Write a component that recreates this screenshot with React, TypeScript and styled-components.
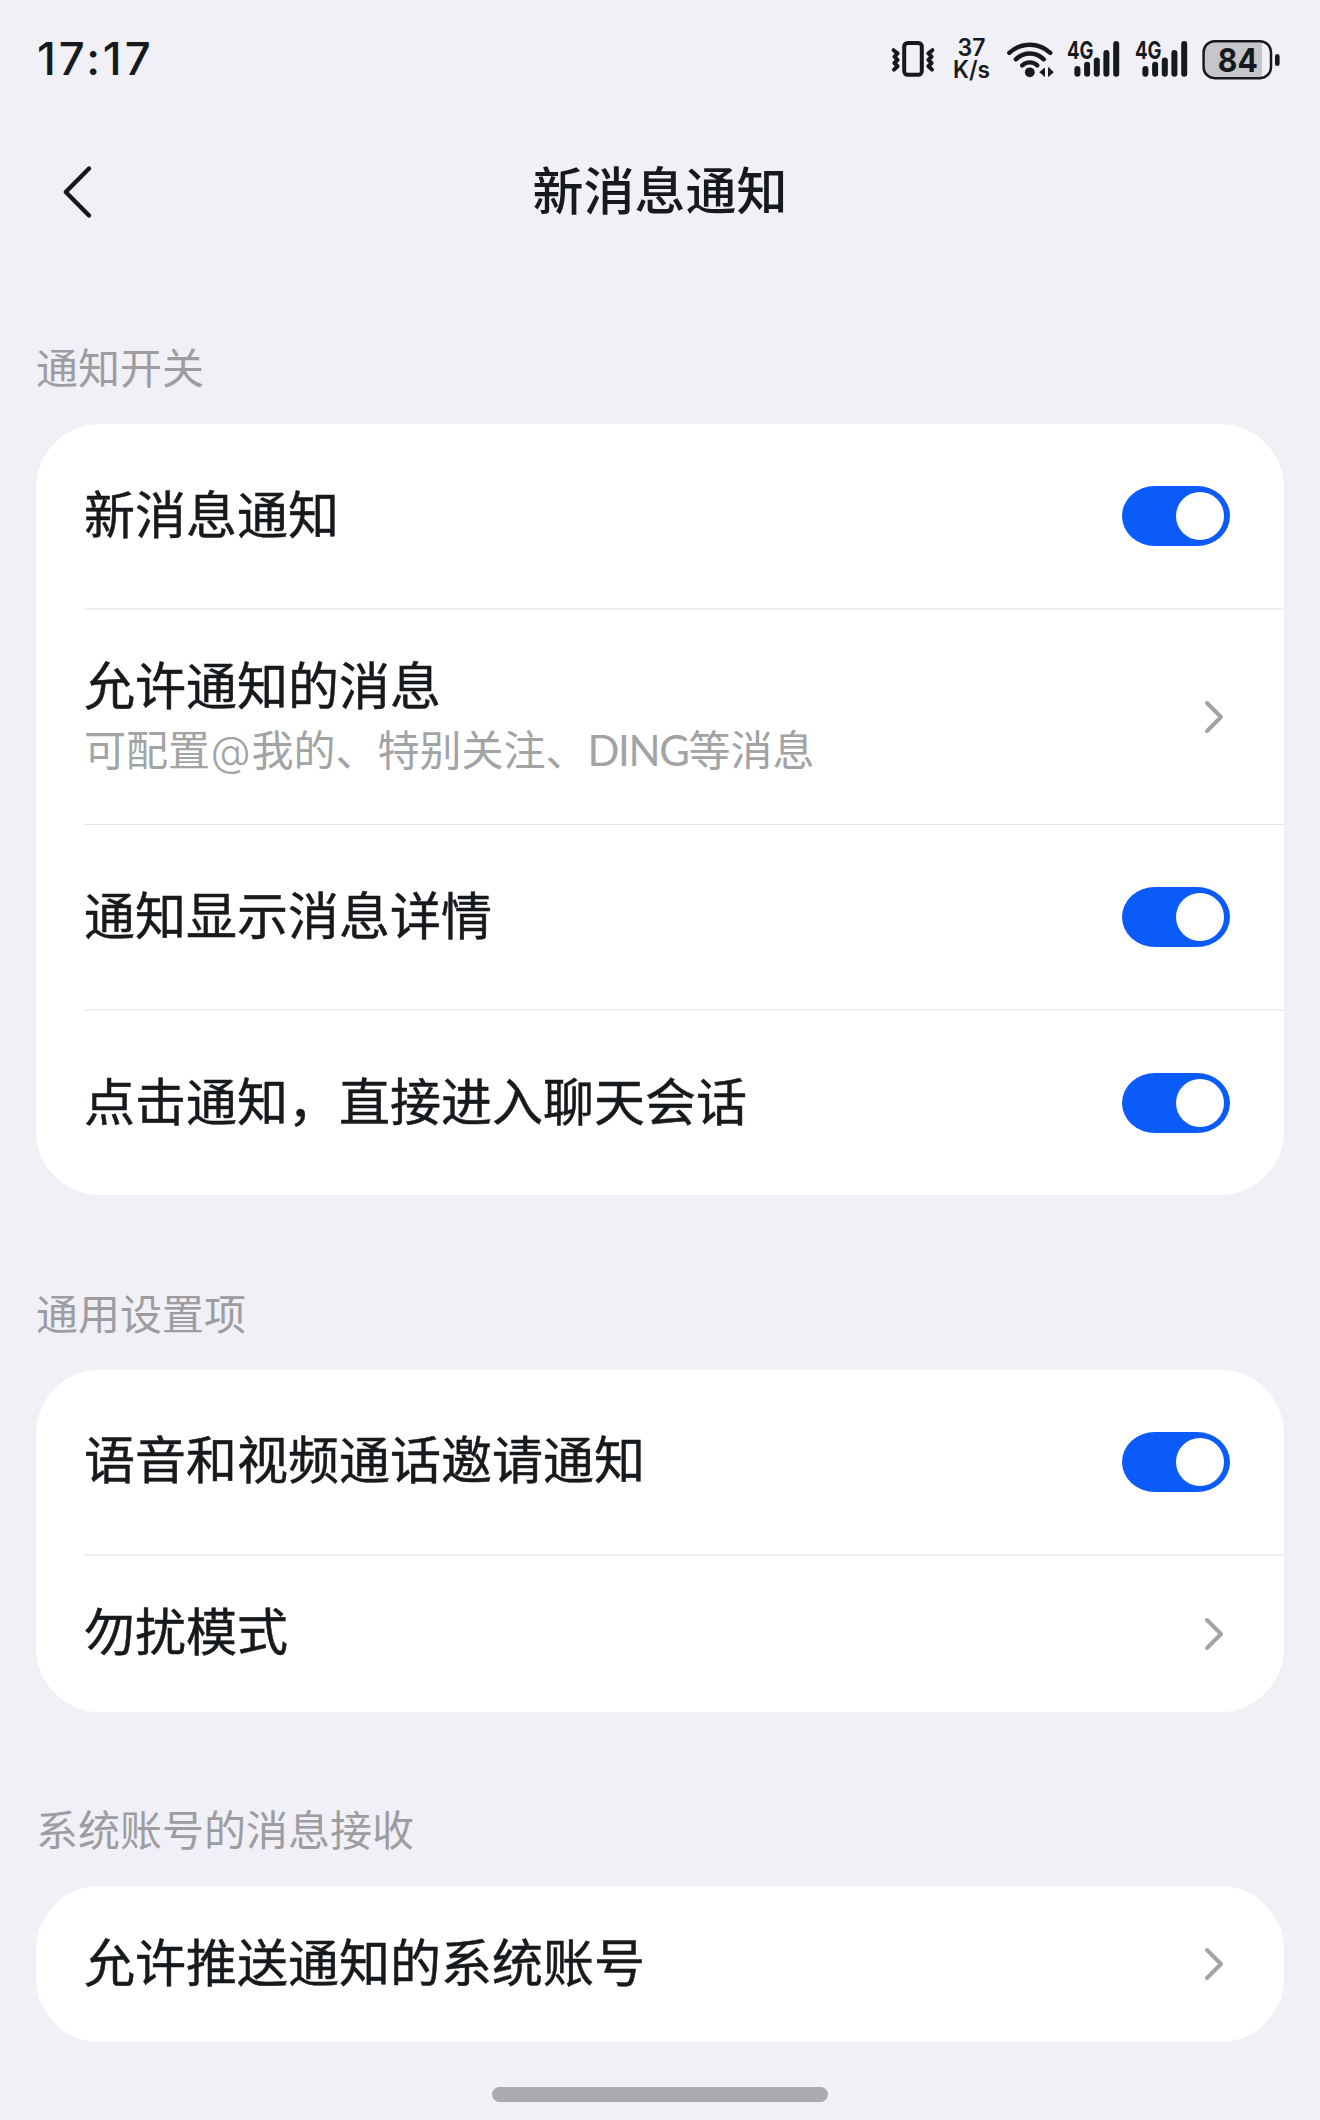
import React, { useState } from 'react';
import styled, { createGlobalStyle } from 'styled-components';

const INK = '#171a1d';

const GlobalStyle = createGlobalStyle`
  * { box-sizing: border-box; }
  body {
    margin: 0;
    background: #f1f0f6;
    color: ${INK};
    font-family: "Noto Sans CJK SC", "Noto Sans", sans-serif;
  }
`;

const Screen = styled.div`
  width: 1320px;
  height: 2120px;
  display: flex;
  flex-direction: column;
  overflow: hidden;
  background: #f1f0f6;
`;

const StatusBar = styled.div`
  height: 120px;
  padding: 0 40px 0 37px;
  display: flex;
  align-items: center;
  justify-content: space-between;
`;

const Clock = styled.div`
  padding-bottom: 3px;
  font-family: Inter, sans-serif;
  font-size: 45.5px;
  font-weight: 500;
  line-height: 60px;
  letter-spacing: 2.9px;
`;

const StatusIcons = styled.div`
  display: flex;
  align-items: center;
`;

const Glyph = styled.svg<{ $gap?: number }>`
  display: block;
  height: 60px;
  flex: none;
  margin-left: ${(p) => p.$gap ?? 0}px;
  overflow: visible;
`;

const AppBar = styled.header`
  height: 144px;
  display: grid;
  grid-template-columns: 150px 1fr 150px;
  align-items: center;
`;

const BackButton = styled.button`
  width: 60px;
  height: 60px;
  margin-left: 48px;
  padding: 0;
  border: 0;
  background: none;
`;

const Title = styled.h1`
  margin: 0;
  padding-bottom: 8px;
  text-align: center;
  font-size: 51px;
  font-weight: 500;
  line-height: 72px;
`;

const Content = styled.main`
  padding: 72px 36px 0;
  display: flex;
  flex-direction: column;
  gap: 86.5px;
`;

const SectionLabel = styled.h2`
  margin: 0 0 28px;
  font-size: 42px;
  font-weight: 400;
  line-height: 60px;
  color: #9d9da1;
`;

const Card = styled.div`
  border-radius: 64px;
  background: #fff;
  overflow: hidden;
`;

const Row = styled.div<{ $height: number }>`
  height: ${(p) => p.$height}px;
  padding: 0 54px 0 48px;
  display: flex;
  align-items: center;
  justify-content: space-between;
`;

const Divider = styled.div<{ $thin?: boolean }>`
  height: ${(p) => (p.$thin ? 1 : 2)}px;
  margin-left: 48px;
  background: ${(p) => (p.$thin ? '#e6e6e7' : '#efeff0')};
`;

const RowText = styled.div<{ $twoLines: boolean }>`
  padding-bottom: ${(p) => (p.$twoLines ? 11 : 9)}px;
`;

const RowTitle = styled.div`
  font-size: 51px;
  line-height: 72px;
  -webkit-text-stroke: 0.5px ${INK};
`;

const RowHint = styled.div`
  font-size: 42px;
  line-height: 58px;
  color: #a2a3a5;
`;

const Latin = styled.span`
  font-family: Lato, sans-serif;
  line-height: 1;
  letter-spacing: -1.35px;
`;

const AtSign = styled.span`
  display: inline-block;
  width: 41.5px;
  font-family: Inter, sans-serif;
  font-size: 41px;
  font-weight: 300;
  line-height: 1;
  text-align: center;
`;

const Toggle = styled.button<{ $on: boolean }>`
  width: 108px;
  height: 60px;
  padding: 6px;
  border: 0;
  border-radius: 33px / 30px;
  display: flex;
  justify-content: ${(p) => (p.$on ? 'flex-end' : 'flex-start')};
  background: ${(p) => (p.$on ? '#0b5afa' : '#d5d5da')};
`;

const Knob = styled.span`
  width: 48px;
  height: 48px;
  border-radius: 50%;
  background: #fff;
`;

const HomeArea = styled.footer`
  margin-top: auto;
  padding-bottom: 18px;
  display: flex;
  justify-content: center;
`;

const HomeIndicator = styled.div`
  width: 336px;
  height: 15px;
  border-radius: 8px;
  background: #aaaaaf;
`;

function VibrateIcon() {
  return (
    <Glyph width="42" viewBox="0 0 42 60" fill="none" stroke={INK} strokeLinecap="round" strokeLinejoin="round">
      <rect x="12.200" y="13" width="17.600" height="31.800" rx="3.500" strokeWidth="4" />
      <path d="M1.600 20.200L5.600 23.400L2.400 26.600L5.600 29.800L2.400 33L5.600 36.200L2 39.600" strokeWidth="4" />
      <path d="M40.400 20.200L36.400 23.400L39.600 26.600L36.400 29.800L39.600 33L36.400 36.200L40 39.600" strokeWidth="4" />
    </Glyph>
  );
}

function NetSpeed() {
  return (
    <Glyph width="38" $gap={19} viewBox="0 0 38 60" fill={INK} fontFamily="Inter, sans-serif" fontWeight="600" fontSize="23.600">
      <text x="4.500" y="26" textLength="28" lengthAdjust="spacingAndGlyphs">37</text>
      <text x="0" y="47.700" textLength="37" lengthAdjust="spacingAndGlyphs">K/s</text>
    </Glyph>
  );
}

function WifiIcon() {
  return (
    <Glyph width="46" $gap={16} viewBox="0 0 46 60" fill="none" stroke={INK} strokeLinecap="round" strokeWidth="4.400">
      <path d="M2.300 22.800C14 12 31.500 12 43.300 22.800" />
      <path d="M8.800 29.300C17 21.500 28.600 21.500 36.800 29.300" />
      <path d="M15.200 35.400C19.500 31.300 26 31.300 30.300 35.400" />
      <circle cx="22.800" cy="42.300" r="4.900" fill={INK} stroke="none" />
      <path d="M32.200 42.200l5.300-4.400v8.400zM46.800 42.200l-4.600-4.400v8.400z" fill={INK} stroke="none" />
      <path d="M37.200 39v7M41.800 38v8" strokeWidth="1.600" />
    </Glyph>
  );
}

const BARS = [
  { x: 7.4, top: 36 },
  { x: 17.1, top: 31.8 },
  { x: 26.8, top: 27.4 },
  { x: 36.4, top: 20 },
  { x: 46.2, top: 11 },
];

function SignalIcon({ gap }: { gap: number }) {
  return (
    <Glyph width="53" $gap={gap} viewBox="0 0 53 60" fill={INK}>
      <text x="0" y="28.800" fontFamily="Inter, sans-serif" fontWeight="700" fontSize="24.400" textLength="26.500" lengthAdjust="spacingAndGlyphs">4G</text>
      {BARS.map((b) => (
        <rect key={b.x} x={b.x} y={b.top} width="6" height={46.8 - b.top} rx="3" />
      ))}
    </Glyph>
  );
}

function BatteryIcon() {
  return (
    <Glyph width="78" $gap={14} viewBox="0 0 78 60" fill={INK}>
      <path d="M12 12.500H60V47.500H12A9 9 0 0 1 3 38.500V21.500A9 9 0 0 1 12 12.500Z" fill="#c5c5ca" />
      <rect x="1.600" y="11.200" width="67.400" height="37" rx="11" fill="none" stroke={INK} strokeWidth="2.500" />
      <rect x="73" y="24" width="4.600" height="12" rx="2.300" />
      <text x="15.800" y="42.300" fontFamily="Inter, sans-serif" fontWeight="700" fontSize="33" textLength="40" lengthAdjust="spacingAndGlyphs">84</text>
    </Glyph>
  );
}

function Chevron() {
  return (
    <svg width="30" height="40" viewBox="0 0 30 40" fill="none" stroke="#a2a3a5" strokeWidth="4" strokeLinecap="round" strokeLinejoin="round">
      <path d="M7 6l14 14L7 34" />
    </svg>
  );
}

function Switch() {
  const [on, setOn] = useState(true);
  return (
    <Toggle type="button" role="switch" aria-checked={on} $on={on} onClick={() => setOn(!on)}>
      <Knob />
    </Toggle>
  );
}

interface Item {
  title: string;
  hint?: React.ReactNode;
  kind: 'switch' | 'link';
  thinDivider?: boolean;
}

const SECTIONS: { label: string; items: Item[] }[] = [
  {
    label: '通知开关',
    items: [
      { title: '新消息通知', kind: 'switch' },
      {
        title: '允许通知的消息',
        kind: 'link',
        thinDivider: true,
        hint: (
          <>
            可配置<AtSign>@</AtSign>我的、特别关注、<Latin>DING</Latin>等消息
          </>
        ),
      },
      { title: '通知显示消息详情', kind: 'switch' },
      { title: '点击通知，直接进入聊天会话', kind: 'switch' },
    ],
  },
  {
    label: '通用设置项',
    items: [
      { title: '语音和视频通话邀请通知', kind: 'switch' },
      { title: '勿扰模式', kind: 'link' },
    ],
  },
  {
    label: '系统账号的消息接收',
    items: [{ title: '允许推送通知的系统账号', kind: 'link' }],
  },
];

function rowHeight(item: Item) {
  if (item.hint) return 214;
  return item.kind === 'switch' ? 184 : 156;
}

export default function App() {
  return (
    <Screen lang="zh-CN">
      <GlobalStyle />
      <StatusBar>
        <Clock>17:17</Clock>
        <StatusIcons>
          <VibrateIcon />
          <NetSpeed />
          <WifiIcon />
          <SignalIcon gap={14} />
          <SignalIcon gap={15} />
          <BatteryIcon />
        </StatusIcons>
      </StatusBar>
      <AppBar>
        <BackButton type="button" aria-label="返回">
          <svg width="60" height="60" viewBox="0 0 60 60" fill="none" stroke={INK} strokeWidth="4.400" strokeLinecap="round" strokeLinejoin="round">
            <path d="M41 6.500L17.800 30L41 53.500" />
          </svg>
        </BackButton>
        <Title>新消息通知</Title>
      </AppBar>
      <Content>
        {SECTIONS.map((section) => (
          <section key={section.label}>
            <SectionLabel>{section.label}</SectionLabel>
            <Card>
              {section.items.map((item, i) => (
                <React.Fragment key={item.title}>
                  <Row $height={rowHeight(item)}>
                    <RowText $twoLines={Boolean(item.hint)}>
                      <RowTitle>{item.title}</RowTitle>
                      {item.hint && <RowHint>{item.hint}</RowHint>}
                    </RowText>
                    {item.kind === 'switch' ? <Switch /> : <Chevron />}
                  </Row>
                  {i < section.items.length - 1 && <Divider $thin={item.thinDivider} />}
                </React.Fragment>
              ))}
            </Card>
          </section>
        ))}
      </Content>
      <HomeArea>
        <HomeIndicator />
      </HomeArea>
    </Screen>
  );
}
